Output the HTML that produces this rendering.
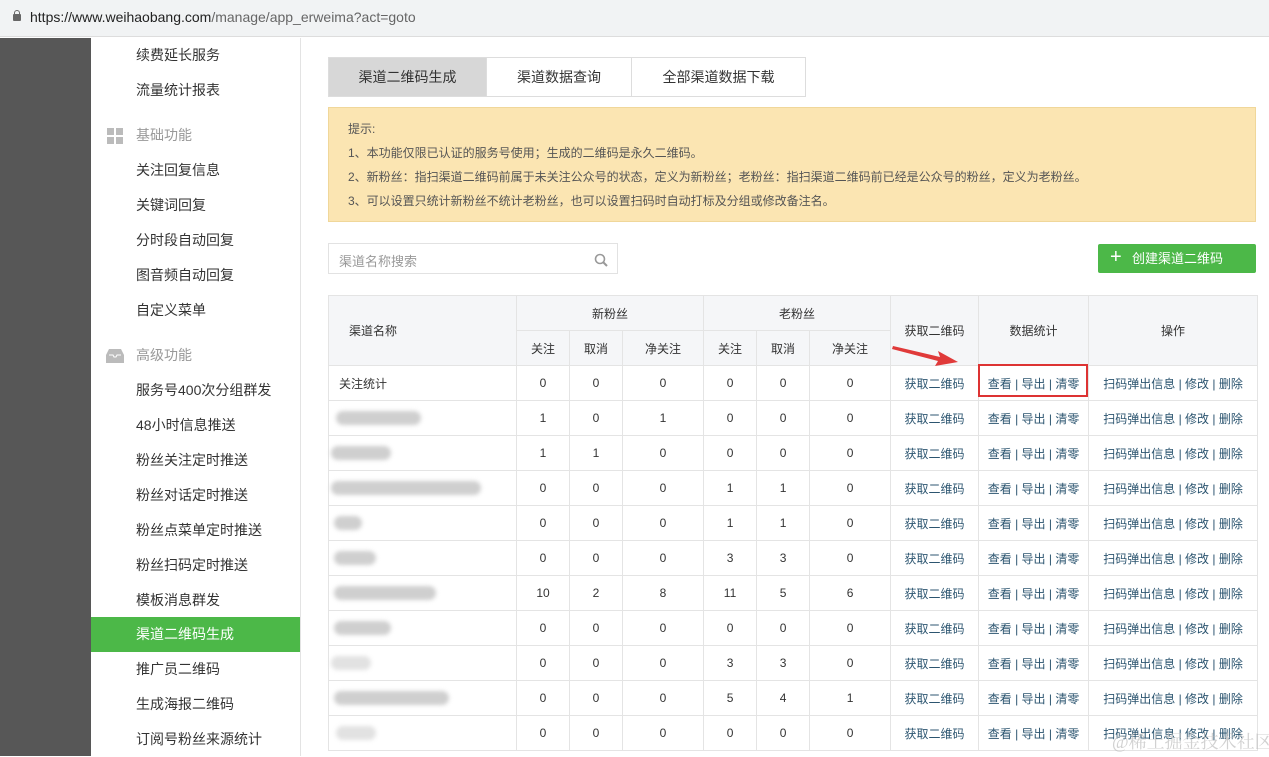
<!DOCTYPE html>
<html><head><meta charset="utf-8"><style>
*{margin:0;padding:0;box-sizing:border-box}
body{width:1269px;height:756px;overflow:hidden;background:#fff;font-family:"Liberation Sans","Noto Sans CJK SC",sans-serif;font-size:13px;color:#333;position:relative}
.addr{position:absolute;left:0;top:0;width:1269px;height:37px;background:#f1f3f4;border-bottom:1px solid #ddd}
.addr span{position:absolute;left:30px;top:9px;font-size:14px;color:#666}
.addr b{font-weight:normal;color:#222}
.lock{position:absolute;left:13px;top:14px;width:8px;height:7px;background:#666;border-radius:1px}
.lock:before{content:"";position:absolute;left:1px;top:-4px;width:4px;height:4px;border:1px solid #666;border-bottom:none;border-radius:3px 3px 0 0}
.dark{position:absolute;left:0;top:38px;width:91px;height:718px;background:#575757}
.side{position:absolute;left:91px;top:38px;width:210px;height:718px;border-right:1px solid #e3e3e3}
.it{position:absolute;left:0;width:209px;height:35px;line-height:35px;padding-left:45px;font-size:14px;color:#333}
.sec{color:#999}
.act{background:#4cb848;color:#fff}
.tabs{position:absolute;left:328px;top:57px;height:40px;display:flex;border:1px solid #ddd}
.tabs div{height:38px;line-height:38px;text-align:center;font-size:14px;border-right:1px solid #ddd}
.note{position:absolute;left:328px;top:107px;width:928px;height:115px;background:#fbe5b2;border:1px solid #f0d79a;padding:9px 0 0 19px;font-size:12px;color:#555}
.note p{line-height:24px}
.search{position:absolute;left:328px;top:243px;width:290px;height:31px;border:1px solid #e2e2e2;color:#999;padding:7px 10px;font-size:13px}
.btn{position:absolute;left:1098px;top:244px;width:158px;height:29px;background:#4cb848;border-radius:2px;color:#fff;font-size:13px;line-height:29px;padding-left:34px}
.btn:before{content:"+";position:absolute;left:12px;top:-1px;font-size:20px}
table{position:absolute;left:328px;top:295px;border-collapse:collapse;width:929px;table-layout:fixed}
td,th{border:1px solid #e4e4e4;height:35px;text-align:center;font-weight:normal;font-size:12px;color:#333}
th{background:#f5f6f8}
.l{color:#2c5570}
.nm{text-align:left;padding-left:10px}
.bl{display:inline-block;height:14px;background:#cfcfcf;border-radius:7px;vertical-align:middle;filter:blur(2px)}
.red{position:absolute;left:978px;top:364px;width:110px;height:33px;border:2px solid #d33}
.wm{position:absolute;left:1112px;top:728px;font-size:18px;white-space:nowrap;color:rgba(190,190,190,.7);font-family:"Liberation Serif","Noto Serif CJK SC",serif}
</style></head><body>
<div class="addr"><div class="lock"></div><span><b>https://www.weihaobang.com</b>/manage/app_erweima?act=goto</span></div>
<div class="dark"></div>
<div class="side">
<div class="it" style="top:0">续费延长服务</div>
<div class="it" style="top:35px">流量统计报表</div>
<div class="it sec" style="top:80px"><svg style="position:absolute;left:16px;top:10px" width="16" height="16"><rect x="0" y="0" width="7" height="7" fill="#bbb"/><rect x="9" y="0" width="7" height="7" fill="#bbb"/><rect x="0" y="9" width="7" height="7" fill="#bbb"/><rect x="9" y="9" width="7" height="7" fill="#bbb"/></svg>基础功能</div>
<div class="it" style="top:115px">关注回复信息</div>
<div class="it" style="top:150px">关键词回复</div>
<div class="it" style="top:185px">分时段自动回复</div>
<div class="it" style="top:220px">图音频自动回复</div>
<div class="it" style="top:255px">自定义菜单</div>
<div class="it sec" style="top:300px"><svg style="position:absolute;left:15px;top:11px" width="18" height="14"><path d="M3 0h12l3 6v8H0V6z" fill="#bbb"/><path d="M3 6h4l1 2h2l1-2h4" stroke="#fff" fill="none"/></svg>高级功能</div>
<div class="it" style="top:335px">服务号400次分组群发</div>
<div class="it" style="top:370px">48小时信息推送</div>
<div class="it" style="top:405px">粉丝关注定时推送</div>
<div class="it" style="top:440px">粉丝对话定时推送</div>
<div class="it" style="top:475px">粉丝点菜单定时推送</div>
<div class="it" style="top:510px">粉丝扫码定时推送</div>
<div class="it" style="top:545px">模板消息群发</div>
<div class="it act" style="top:579px">渠道二维码生成</div>
<div class="it" style="top:614px">推广员二维码</div>
<div class="it" style="top:649px">生成海报二维码</div>
<div class="it" style="top:684px">订阅号粉丝来源统计</div>
</div>
<div class="tabs"><div style="width:158px;background:#d7d7d7">渠道二维码生成</div><div style="width:145px">渠道数据查询</div><div style="width:173px;border-right:none">全部渠道数据下载</div></div>
<div class="note"><p>提示:</p><p>1、本功能仅限已认证的服务号使用；生成的二维码是永久二维码。</p><p>2、新粉丝：指扫渠道二维码前属于未关注公众号的状态，定义为新粉丝；老粉丝：指扫渠道二维码前已经是公众号的粉丝，定义为老粉丝。</p><p>3、可以设置只统计新粉丝不统计老粉丝，也可以设置扫码时自动打标及分组或修改备注名。</p></div>
<div class="search">渠道名称搜索<svg style="position:absolute;right:9px;top:9px" width="14" height="14"><circle cx="6" cy="6" r="4.5" stroke="#999" stroke-width="1.6" fill="none"/><path d="M9 9l4 4" stroke="#999" stroke-width="2"/></svg></div>
<div class="btn">创建渠道二维码</div>
<table>
<colgroup><col style="width:188px"><col style="width:53px"><col style="width:53px"><col style="width:81px"><col style="width:53px"><col style="width:53px"><col style="width:81px"><col style="width:88px"><col style="width:110px"><col style="width:169px"></colgroup>
<tr><th rowspan="2" class="nm" style="padding-left:20px">渠道名称</th><th colspan="3">新粉丝</th><th colspan="3">老粉丝</th><th rowspan="2">获取二维码</th><th rowspan="2">数据统计</th><th rowspan="2">操作</th></tr>
<tr><th>关注</th><th>取消</th><th>净关注</th><th>关注</th><th>取消</th><th>净关注</th></tr>
<tr><td class="nm">关注统计</td><td>0</td><td>0</td><td>0</td><td>0</td><td>0</td><td>0</td><td class="l">获取二维码</td><td class="l">查看 | 导出 | 清零</td><td class="l">扫码弹出信息 | 修改 | 删除</td></tr>
<tr><td class="nm"><span class="bl" style="width:85px;margin-left:-3px"></span></td><td>1</td><td>0</td><td>1</td><td>0</td><td>0</td><td>0</td><td class="l">获取二维码</td><td class="l">查看 | 导出 | 清零</td><td class="l">扫码弹出信息 | 修改 | 删除</td></tr>
<tr><td class="nm"><span class="bl" style="width:60px;margin-left:-8px"></span></td><td>1</td><td>1</td><td>0</td><td>0</td><td>0</td><td>0</td><td class="l">获取二维码</td><td class="l">查看 | 导出 | 清零</td><td class="l">扫码弹出信息 | 修改 | 删除</td></tr>
<tr><td class="nm"><span class="bl" style="width:150px;margin-left:-8px"></span></td><td>0</td><td>0</td><td>0</td><td>1</td><td>1</td><td>0</td><td class="l">获取二维码</td><td class="l">查看 | 导出 | 清零</td><td class="l">扫码弹出信息 | 修改 | 删除</td></tr>
<tr><td class="nm"><span class="bl" style="width:28px;margin-left:-5px"></span></td><td>0</td><td>0</td><td>0</td><td>1</td><td>1</td><td>0</td><td class="l">获取二维码</td><td class="l">查看 | 导出 | 清零</td><td class="l">扫码弹出信息 | 修改 | 删除</td></tr>
<tr><td class="nm"><span class="bl" style="width:42px;margin-left:-5px"></span></td><td>0</td><td>0</td><td>0</td><td>3</td><td>3</td><td>0</td><td class="l">获取二维码</td><td class="l">查看 | 导出 | 清零</td><td class="l">扫码弹出信息 | 修改 | 删除</td></tr>
<tr><td class="nm"><span class="bl" style="width:102px;margin-left:-5px"></span></td><td>10</td><td>2</td><td>8</td><td>11</td><td>5</td><td>6</td><td class="l">获取二维码</td><td class="l">查看 | 导出 | 清零</td><td class="l">扫码弹出信息 | 修改 | 删除</td></tr>
<tr><td class="nm"><span class="bl" style="width:57px;margin-left:-5px"></span></td><td>0</td><td>0</td><td>0</td><td>0</td><td>0</td><td>0</td><td class="l">获取二维码</td><td class="l">查看 | 导出 | 清零</td><td class="l">扫码弹出信息 | 修改 | 删除</td></tr>
<tr><td class="nm"><span class="bl" style="width:40px;margin-left:-8px;background:#e2e2e2"></span></td><td>0</td><td>0</td><td>0</td><td>3</td><td>3</td><td>0</td><td class="l">获取二维码</td><td class="l">查看 | 导出 | 清零</td><td class="l">扫码弹出信息 | 修改 | 删除</td></tr>
<tr><td class="nm"><span class="bl" style="width:115px;margin-left:-5px"></span></td><td>0</td><td>0</td><td>0</td><td>5</td><td>4</td><td>1</td><td class="l">获取二维码</td><td class="l">查看 | 导出 | 清零</td><td class="l">扫码弹出信息 | 修改 | 删除</td></tr>
<tr><td class="nm"><span class="bl" style="width:40px;margin-left:-3px;background:#e2e2e2"></span></td><td>0</td><td>0</td><td>0</td><td>0</td><td>0</td><td>0</td><td class="l">获取二维码</td><td class="l">查看 | 导出 | 清零</td><td class="l">扫码弹出信息 | 修改 | 删除</td></tr>
</table>
<div class="red"></div>
<svg style="position:absolute;left:890px;top:340px" width="75" height="30"><path d="M3 6 L50 17 L48 11 L68 22 L45 26 L48 21 L2 9z" fill="#e03a3a"/></svg>
<div class="wm">@稀土掘金技术社区</div>
</body></html>
